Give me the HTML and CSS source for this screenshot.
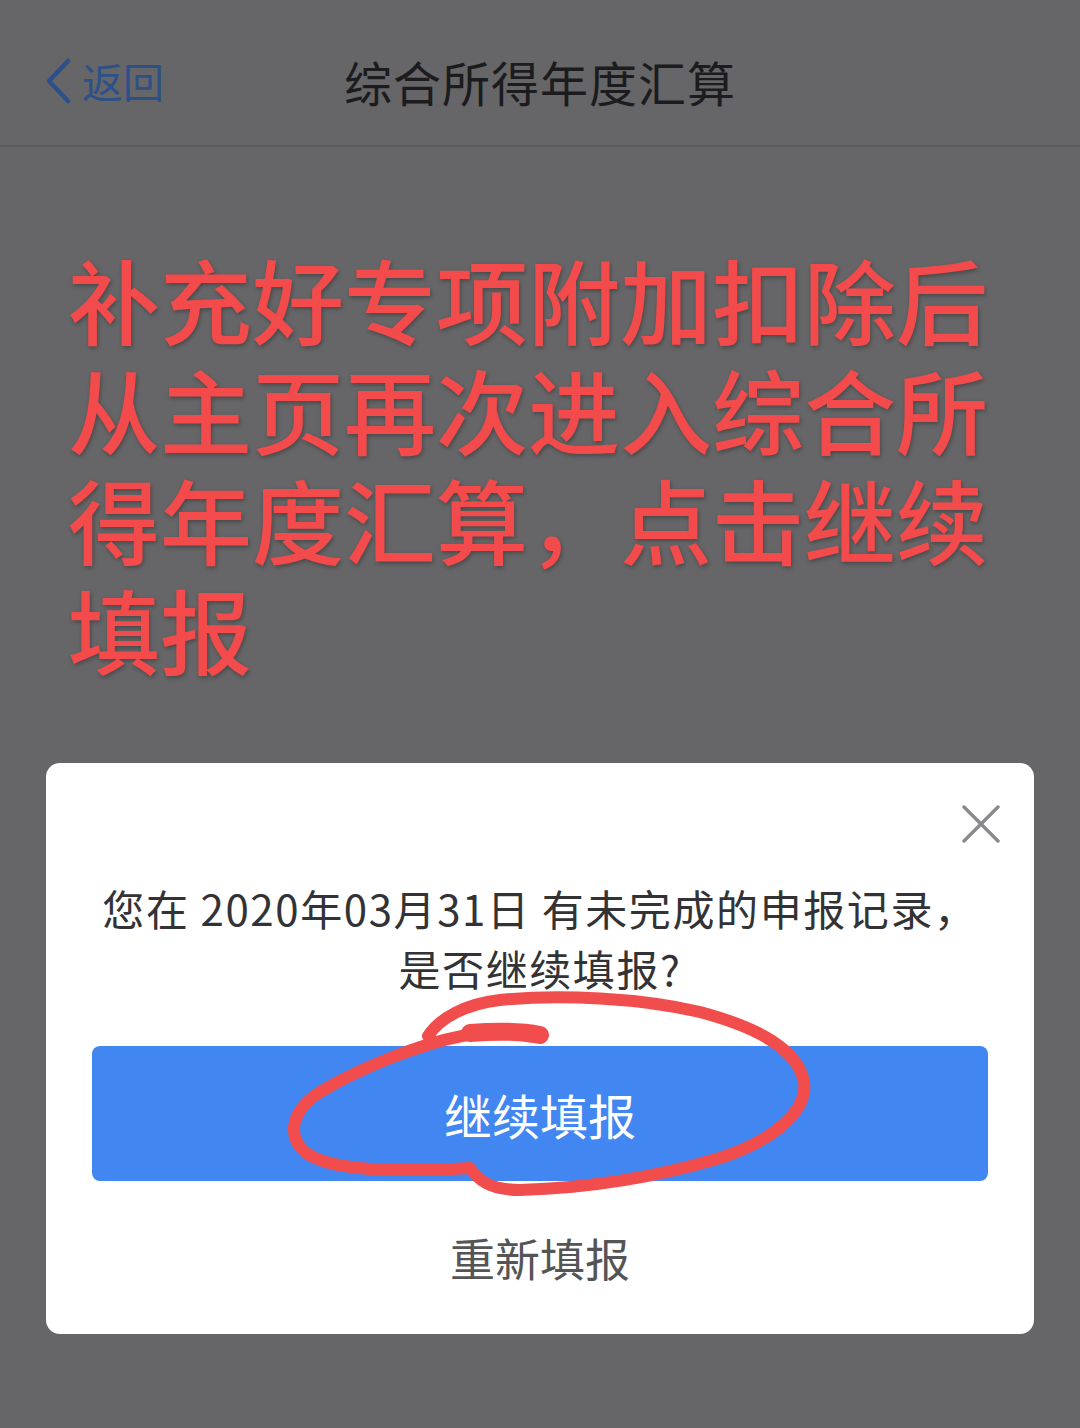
FILE: index.html
```html
<!DOCTYPE html>
<html lang="zh-CN">
<head>
<meta charset="utf-8">
<title>综合所得年度汇算</title>
<link rel="stylesheet" href="styles.css">
</head>
<body>
<div class="page">
  <header class="navbar">
    <div class="back">
      <svg class="chev" width="28" height="46" viewBox="0 0 28 46"><path d="M24 3 L5 23 L24 43" fill="none" stroke="#2d5088" stroke-width="4.5" stroke-linecap="round" stroke-linejoin="round"/></svg>
      <span class="back-text">返回</span>
    </div>
    <div class="title">综合所得年度汇算</div>
  </header>

  <div class="note">补充好专项附加扣除后从主页再次进入综合所得年度汇算，点击继续填报</div>

  <div class="modal">
    <div class="modal-top">
      <svg class="close" width="38" height="38" viewBox="0 0 38 38"><path d="M2 2 L36 36 M36 2 L2 36" stroke="#8a8a8c" stroke-width="3.5" stroke-linecap="round"/></svg>
    </div>
    <div class="msg">您在 2020年03月31日 有未完成的申报记录，<br>是否继续填报?</div>
    <div class="btn-primary">继续填报</div>
    <div class="btn-secondary">重新填报</div>
  </div>

  <svg class="scribble" width="1080" height="1428" viewBox="0 0 1080 1428">
    <path d="M540 1036 C515 1033 485 1032 462 1036 C420 1044 360 1068 320 1092 C292 1110 286 1135 305 1152 C330 1172 400 1172 470 1168 C478 1180 490 1190 520 1190 C590 1188 660 1176 720 1158 C775 1140 808 1110 804 1082 C798 1050 760 1028 700 1012 C640 998 560 994 500 1000 C465 1004 440 1018 428 1036"
      fill="none" stroke="#f24d4d" stroke-width="12" stroke-linecap="round" stroke-linejoin="round"/>
    <path d="M470 1033 C495 1031 520 1031 540 1035" fill="none" stroke="#f24d4d" stroke-width="18" stroke-linecap="round"/>
  </svg>
</div>
</body>
</html>
```

FILE: styles.css
```css
* { box-sizing: border-box; }
html, body {
  margin: 0;
  padding: 0;
  background: #666668;
  width: 1080px;
  height: 1428px;
  overflow: hidden;
}
.page {
  position: relative;
  width: 1080px;
  height: 1428px;
  font-family: "Noto Sans CJK SC", "Noto Sans", sans-serif;
}
.navbar {
  height: 147px;
  border-bottom: 2px solid #5a5a5c;
  display: flex;
  align-items: center;
  position: relative;
  padding-top: 16px;
}
.back {
  display: flex;
  align-items: center;
  padding-left: 44px;
  gap: 10px;
}
.back-text {
  font-size: 41px;
  color: #2d5088;
  line-height: 1;
}
.title {
  position: absolute;
  left: 0;
  right: 0;
  top: 16px;
  bottom: 0;
  display: flex;
  align-items: center;
  justify-content: center;
  font-size: 48px;
  color: #1c1c1e;
  letter-spacing: 1px;
  pointer-events: none;
}
.note {
  margin-top: 96px;
  padding: 0 60px 0 68px;
  font-size: 92px;
  line-height: 110px;
  font-weight: 500;
  color: #f34b4b;
  text-shadow: 1px 2px 4px rgba(0,0,0,0.3);
}
.modal {
  margin: 80px 46px 0;
  background: #ffffff;
  border-radius: 14px;
  padding: 42px 0 46px;
}
.modal-top {
  display: flex;
  justify-content: flex-end;
  padding-right: 34px;
}
.close { display: block; }
.msg {
  margin-top: 35px;
  text-align: center;
  font-size: 42px;
  line-height: 60px;
  letter-spacing: 1.6px;
  color: #333335;
}
.btn-primary {
  margin: 48px 46px 0;
  height: 135px;
  border-radius: 8px;
  background: #4286f1;
  color: #ffffff;
  font-size: 48px;
  display: flex;
  align-items: center;
  justify-content: center;
}
.btn-secondary {
  margin-top: 47px;
  text-align: center;
  font-size: 45px;
  line-height: 60px;
  color: #555557;
}
.scribble {
  position: absolute;
  left: 0;
  top: 0;
  pointer-events: none;
}
```
